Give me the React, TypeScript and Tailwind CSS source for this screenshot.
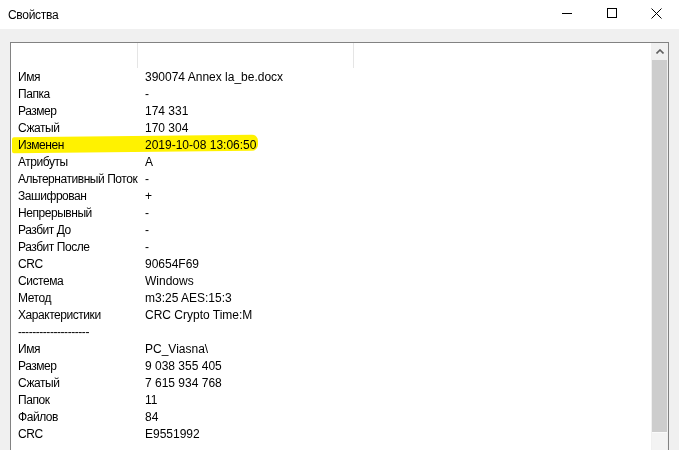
const ROWS: [string, string][] = [
  ["Имя", "390074 Annex la_be.docx"],
  ["Папка", "-"],
  ["Размер", "174 331"],
  ["Сжатый", "170 304"],
  ["Изменен", "2019-10-08 13:06:50"],
  ["Атрибуты", "A"],
  ["Альтернативный Поток", "-"],
  ["Зашифрован", "+"],
  ["Непрерывный", "-"],
  ["Разбит До", "-"],
  ["Разбит После", "-"],
  ["CRC", "90654F69"],
  ["Система", "Windows"],
  ["Метод", "m3:25 AES:15:3"],
  ["Характеристики", "CRC Crypto Time:M"],
  ["--------------------", ""],
  ["Имя", "PC_Viasna\\"],
  ["Размер", "9 038 355 405"],
  ["Сжатый", "7 615 934 768"],
  ["Папок", "11"],
  ["Файлов", "84"],
  ["CRC", "E9551992"],
];

function TitleBar() {
  return (
    <div className="flex h-[29px] shrink-0 items-center bg-white">
      <span className="pl-[8px] text-[12px] tracking-[-0.3px] text-black">Свойства</span>
      <div className="ml-auto flex h-full">
        <div className="flex h-full w-[45px] items-center justify-center">
          <svg width="10" height="10" viewBox="0 0 10 10" className="-mt-[3px]">
            <path d="M0 5.5h10" stroke="#000" strokeWidth="1" />
          </svg>
        </div>
        <div className="flex h-full w-[45px] items-center justify-center">
          <svg width="10" height="10" viewBox="0 0 10 10" className="-mt-[3px]">
            <rect x="0.5" y="0.5" width="9" height="9" fill="none" stroke="#000" strokeWidth="1" />
          </svg>
        </div>
        <div className="flex h-full w-[45px] items-center justify-center">
          <svg width="11" height="11" viewBox="0 0 11 11" className="-mt-[3px]">
            <path d="M0.5 0.5l10 10M10.5 0.5l-10 10" stroke="#000" strokeWidth="1" />
          </svg>
        </div>
      </div>
    </div>
  );
}

function Scrollbar() {
  return (
    <div className="flex w-[17px] shrink-0 flex-col bg-[#f0f0f0]">
      <div className="flex h-[17px] items-center justify-center">
        <svg width="8" height="5" viewBox="0 0 8 5">
          <path d="M0.5 4.5L4 1l3.5 3.5" fill="none" stroke="#606060" strokeWidth="1.6" />
        </svg>
      </div>
      <div className="mx-[1px] h-[372px] shrink-0 bg-[#cdcdcd]" />
      <div className="mx-[1px] flex-1 border-t border-[#fafafa] bg-[#f3f3f3]" />
    </div>
  );
}

export default function App() {
  return (
    <div
      className="flex h-[450px] w-[679px] flex-col overflow-hidden bg-[#f0f0f0] text-black"
      style={{ fontFamily: '"Liberation Sans", Arial, sans-serif' }}
    >
      <TitleBar />
      <div className="flex-1 pl-[10px] pr-[10px] pt-[13px]">
        <div className="relative flex h-[420px] border border-[#828282] bg-white">
          <div className="min-w-0 flex-1">
            <div className="flex h-[25px]">
              <div className="w-[127px] border-r border-[#e5e5e5]" />
              <div className="w-[216px] border-r border-[#e5e5e5]" />
            </div>
            {ROWS.map(([k, v], i) => (
              <div key={i} className="flex h-[17px] items-center text-[12px] leading-none">
                <span className="w-[127px] shrink-0 pl-[7px] tracking-[-0.45px] whitespace-nowrap">{k}</span>
                <span className="pl-[7px] whitespace-nowrap">{v}</span>
              </div>
            ))}
            <div
              className="absolute left-[1px] top-[93px] h-[16px] w-[246px] bg-[#fff200] mix-blend-multiply"
              style={{ transform: "skewY(-0.6deg)", borderRadius: "2px 6px 6px 2px" }}
            />
          </div>
          <Scrollbar />
        </div>
      </div>
    </div>
  );
}
